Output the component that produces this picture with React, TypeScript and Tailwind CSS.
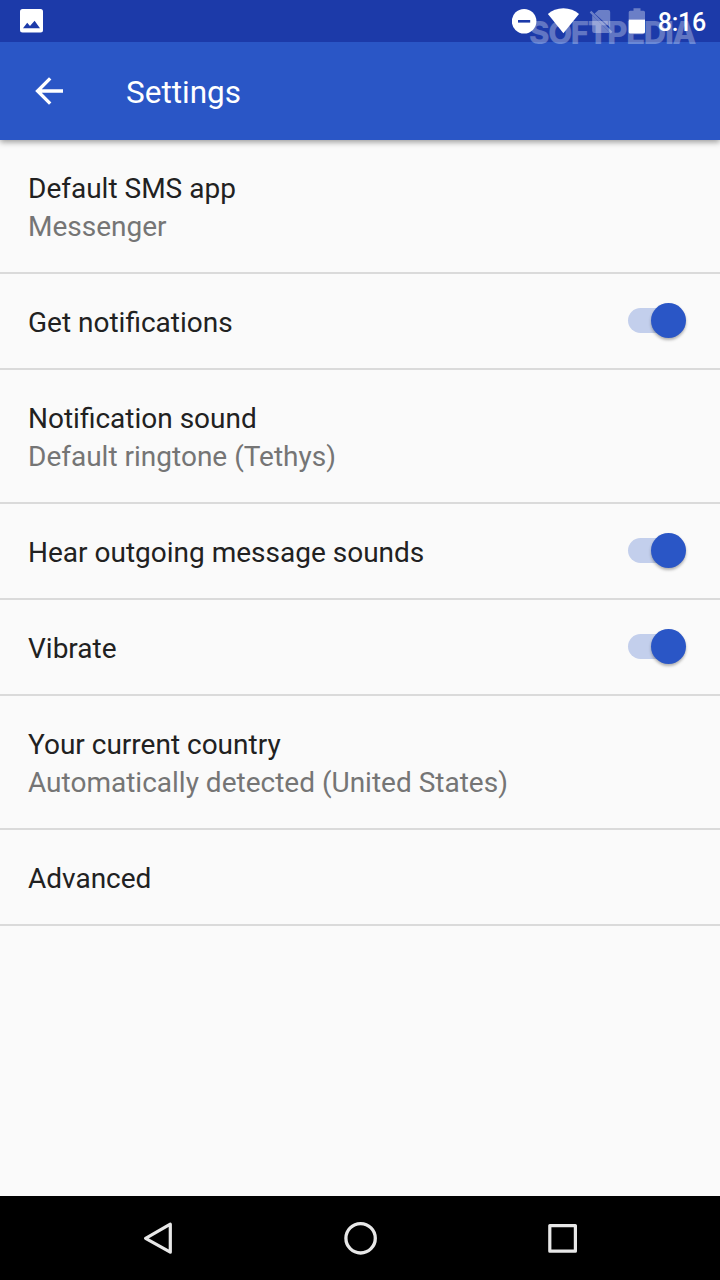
type Setting = {
  title: string;
  summary?: string;
  toggle?: boolean;
};

const settings: Setting[] = [
  { title: "Default SMS app", summary: "Messenger" },
  { title: "Get notifications", toggle: true },
  { title: "Notification sound", summary: "Default ringtone (Tethys)" },
  { title: "Hear outgoing message sounds", toggle: true },
  { title: "Vibrate", toggle: true },
  { title: "Your current country", summary: "Automatically detected (United States)" },
  { title: "Advanced" },
];

function StatusBar() {
  return (
    <div className="relative flex h-[42px] items-start justify-between bg-[#1c3aa9] pl-5 pr-[14px]">
      <svg className="mt-[9px] h-[24px] w-[23px]" viewBox="0 0 23 24">
        <rect width="23" height="23.5" rx="2.5" fill="#fff" />
        <path d="M3 19.2 7.2 13.8 10 17 14.6 11.8 20 19.2Z" fill="#1c3aa9" />
      </svg>
      <div className="flex items-start text-white">
        <svg className="h-[42px] w-[146px]" viewBox="512 0 146 42" fill="#fff">
          <circle cx="524.1" cy="21.3" r="12.3" />
          <rect x="518" y="20" width="12.2" height="2.6" fill="#1c3aa9" />
          <path d="M563.4 33.2 547.9 13.9C552 10.4 557.2 8.2 563.4 8.2S574.8 10.4 579 13.9Z" />
          <g opacity="0.35">
            <path d="M598.6 10H608.2Q610.2 10 610.2 12V27.4L594.6 13.6Z" />
            <path d="M592.2 14.9 609.6 32.3 608.5 33H594.2Q592.2 33 592.2 31Z" />
            <path d="M589.7 12.4 591.3 10.8 612.4 31.8 610.8 33.4 609.6 32.3 592.2 14.9Z" />
            <path d="M633.5 8.3H640.5V10.8H643.5Q645 10.8 645 12.3V19.4H628.7V12.3Q628.7 10.8 630.2 10.8H633.5Z" />
          </g>
          <path d="M628.7 19.4H645V32Q645 33.5 643.5 33.5H630.2Q628.7 33.5 628.7 32Z" />
        </svg>
        <span className="text-[25px] font-medium leading-[46px] tracking-[-0.25px]">8:16</span>
      </div>
      <span className="absolute left-[529px] top-[16px] z-20 font-[Inter] text-[31px] font-extrabold leading-[34px] tracking-[-1.3px] text-white opacity-30">
        SOFTPEDIA
      </span>
    </div>
  );
}

function AppBar() {
  return (
    <header className="flex h-[98px] items-center bg-[#2a56c6] pl-[35px] text-white shadow-[0_2px_6px_rgba(0,0,0,0.4)]">
      <svg className="h-7 w-7" viewBox="0 0 28 28" fill="none" stroke="currentColor" strokeWidth="3.4">
        <path d="M28 14H3M15.2 1.4 2.6 14 15.2 26.6" />
      </svg>
      <h1 className="ml-[63px] mt-[3px] text-[31.5px] leading-10">Settings</h1>
    </header>
  );
}

function Toggle() {
  return (
    <div className="relative -mt-px h-[35px] w-[58px]">
      <div className="mt-[5px] h-[25px] w-[48px] rounded-full bg-[#c3cfec]" />
      <div className="absolute right-0 top-0 h-[35px] w-[35px] rounded-full bg-[#2a56c6] shadow-[0_2px_3px_rgba(0,0,0,0.3)]" />
    </div>
  );
}

function Row({ title, summary, toggle }: Setting) {
  return (
    <li className="flex justify-between border-b-2 border-[#dadada] pb-[26px] pl-7 pr-[34px] pt-[30px] text-[28px] leading-[38px]">
      <div>
        <p className="text-[#212121]">{title}</p>
        {summary && <p className="text-[#757575]">{summary}</p>}
      </div>
      {toggle && <Toggle />}
    </li>
  );
}

function NavBar() {
  return (
    <nav className="flex h-[84px] items-center justify-between bg-black pl-[143px] pr-[142px]">
      <svg className="h-9 w-[30px]" viewBox="0 0 30 36" fill="none" stroke="#e8e8e8" strokeWidth="3.2" strokeLinejoin="round">
        <path d="M27.3 4.2V32.2L2.6 18.3Z" />
      </svg>
      <svg className="h-9 w-9" viewBox="0 0 36 36" fill="none" stroke="#e8e8e8" strokeWidth="3.3">
        <circle cx="17.6" cy="18.3" r="14.7" />
      </svg>
      <svg className="h-9 w-[30px]" viewBox="0 0 30 36" fill="none" stroke="#e8e8e8" strokeWidth="3.2" strokeLinejoin="round">
        <rect x="1.8" y="5.6" width="25.6" height="25.6" />
      </svg>
    </nav>
  );
}

export default function App() {
  return (
    <div className="flex h-[1280px] w-[720px] flex-col overflow-hidden bg-[#fafafa] font-[Roboto,sans-serif]">
      <div className="relative z-10">
        <StatusBar />
        <AppBar />
      </div>
      <ul className="flex-1">
        {settings.map((item) => (
          <Row key={item.title} {...item} />
        ))}
      </ul>
      <NavBar />
    </div>
  );
}
